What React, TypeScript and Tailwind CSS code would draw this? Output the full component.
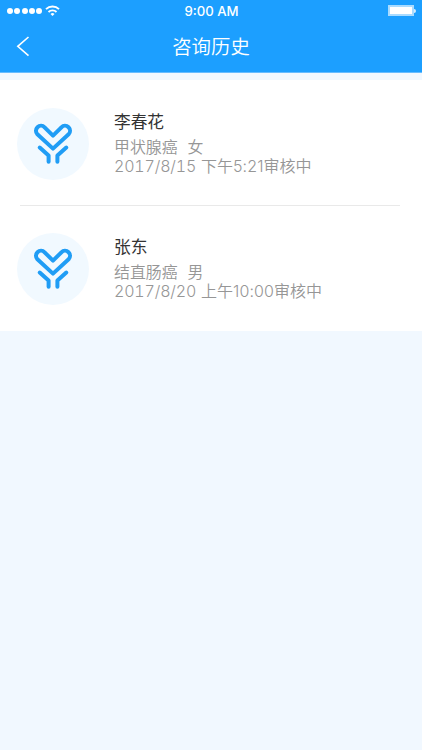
type Consult = {
	name: string;
	disease: string;
	gender: string;
	date: string;
	period: string;
	time: string;
	status: string;
};

const consults: Consult[] = [
	{
		name: "李春花",
		disease: "甲状腺癌",
		gender: "女",
		date: "2017/8/15",
		period: "下午",
		time: "5:21",
		status: "审核中",
	},
	{
		name: "张东",
		disease: "结直肠癌",
		gender: "男",
		date: "2017/8/20",
		period: "上午",
		time: "10:00",
		status: "审核中",
	},
];

const StatusBar = () => {
	return (
		<div className="flex h-[21px] items-center justify-between pl-[7px] pr-[6px]">
			<div className="flex flex-1 items-center gap-[3px]">
				<div className="flex gap-[1.3px]">
					{[0, 1, 2, 3, 4].map((i) => (
						<span key={i} className="size-[6px] rounded-full bg-white" />
					))}
				</div>
				<svg className="h-[11px] w-[15px]" viewBox="0 0 15 11" fill="none" stroke="#fff" strokeWidth="1.9">
					<path d="M1 4.2a9.2 9.2 0 0 1 13 0" />
					<path d="M3.5 7a5.7 5.7 0 0 1 8 0" />
					<path d="M7.5 10.9 5.5 8.9a2.9 2.9 0 0 1 4 0z" fill="#fff" stroke="none" />
				</svg>
			</div>
			<span className="pt-px font-['Inter','Noto_Sans_CJK_SC',sans-serif] text-[13.2px] font-medium leading-5 text-white">
				9:00 AM
			</span>
			<div className="flex flex-1 items-center justify-end">
				<div className="h-[11px] w-[26px] border-2 border-[#a9dbff] bg-white" />
				<div className="h-[4px] w-[2px] rounded-r-full bg-[#d5edff]" />
			</div>
		</div>
	);
};

const Header = () => {
	return (
		<div className="grid h-[51px] grid-cols-[40px_1fr_40px] text-white">
			<button className="flex pl-4 pt-[15px]" aria-label="返回">
				<svg className="h-[21px] w-[14px]" viewBox="0 0 14 21" fill="none" stroke="currentColor" strokeWidth="1.6">
					<path d="M12.5 1 1.8 10.3 12.5 19.6" />
				</svg>
			</button>
			<h1 className="pt-[11px] text-center text-[19.4px] font-[350] leading-7">咨询历史</h1>
		</div>
	);
};

const Avatar = () => {
	return (
		<div className="size-[72px] shrink-0 rounded-full bg-[#f1f9ff]">
			<svg
				className="size-[72px]"
				viewBox="0 0 72 72"
				fill="none"
				stroke="#209df5"
				strokeWidth="4"
				strokeLinecap="round"
				strokeLinejoin="round"
			>
				<path d="M36 27.6 27.6 19.3A5 5 0 0 0 20.4 26.3L36 40.6 51.6 26.3A5 5 0 0 0 44.4 19.3Z" />
				<path d="M22.7 39.5 31.6 47.5V53.7" />
				<path d="M49.3 39.5 40.4 47.5V53.7" />
			</svg>
		</div>
	);
};

const ConsultItem = ({ item }: { item: Consult }) => {
	return (
		<div className="flex h-[72px] gap-[25px] px-[17px]">
			<Avatar />
			<div className="whitespace-nowrap text-[#969696]">
				<p className="text-[16.7px] leading-[26px] text-[#333]">{item.name}</p>
				<p className="flex gap-[10px] pt-[3px] text-[15.9px] font-[350] leading-[19px]">
					<span>{item.disease}</span>
					<span>{item.gender}</span>
				</p>
				<p className="flex font-['Inter','Noto_Sans_CJK_SC',sans-serif] text-base font-[350] leading-5">
					<span className="w-[87px] tabular-nums tracking-[-0.17px]">{item.date}</span>
					<span>{item.period}</span>
					<span className="tracking-[0.1px]">{item.time}</span>
					<span>{item.status}</span>
				</p>
			</div>
		</div>
	);
};

export default function App() {
	return (
		<div className="min-h-screen bg-[#f1f8ff] font-['Noto_Sans_CJK_SC',sans-serif]">
			<div className="border-b border-[#67bcff] bg-[#1c9fff]">
				<StatusBar />
				<Header />
			</div>
			<div className="mt-[7px] flex h-[251px] flex-col bg-white pt-[27.5px]">
				<ConsultItem item={consults[0]} />
				<div className="ml-5 mr-[22px] mb-[27px] mt-[25.5px] h-px shrink-0 bg-[#e9e9e9]" />
				<ConsultItem item={consults[1]} />
			</div>
		</div>
	);
}
